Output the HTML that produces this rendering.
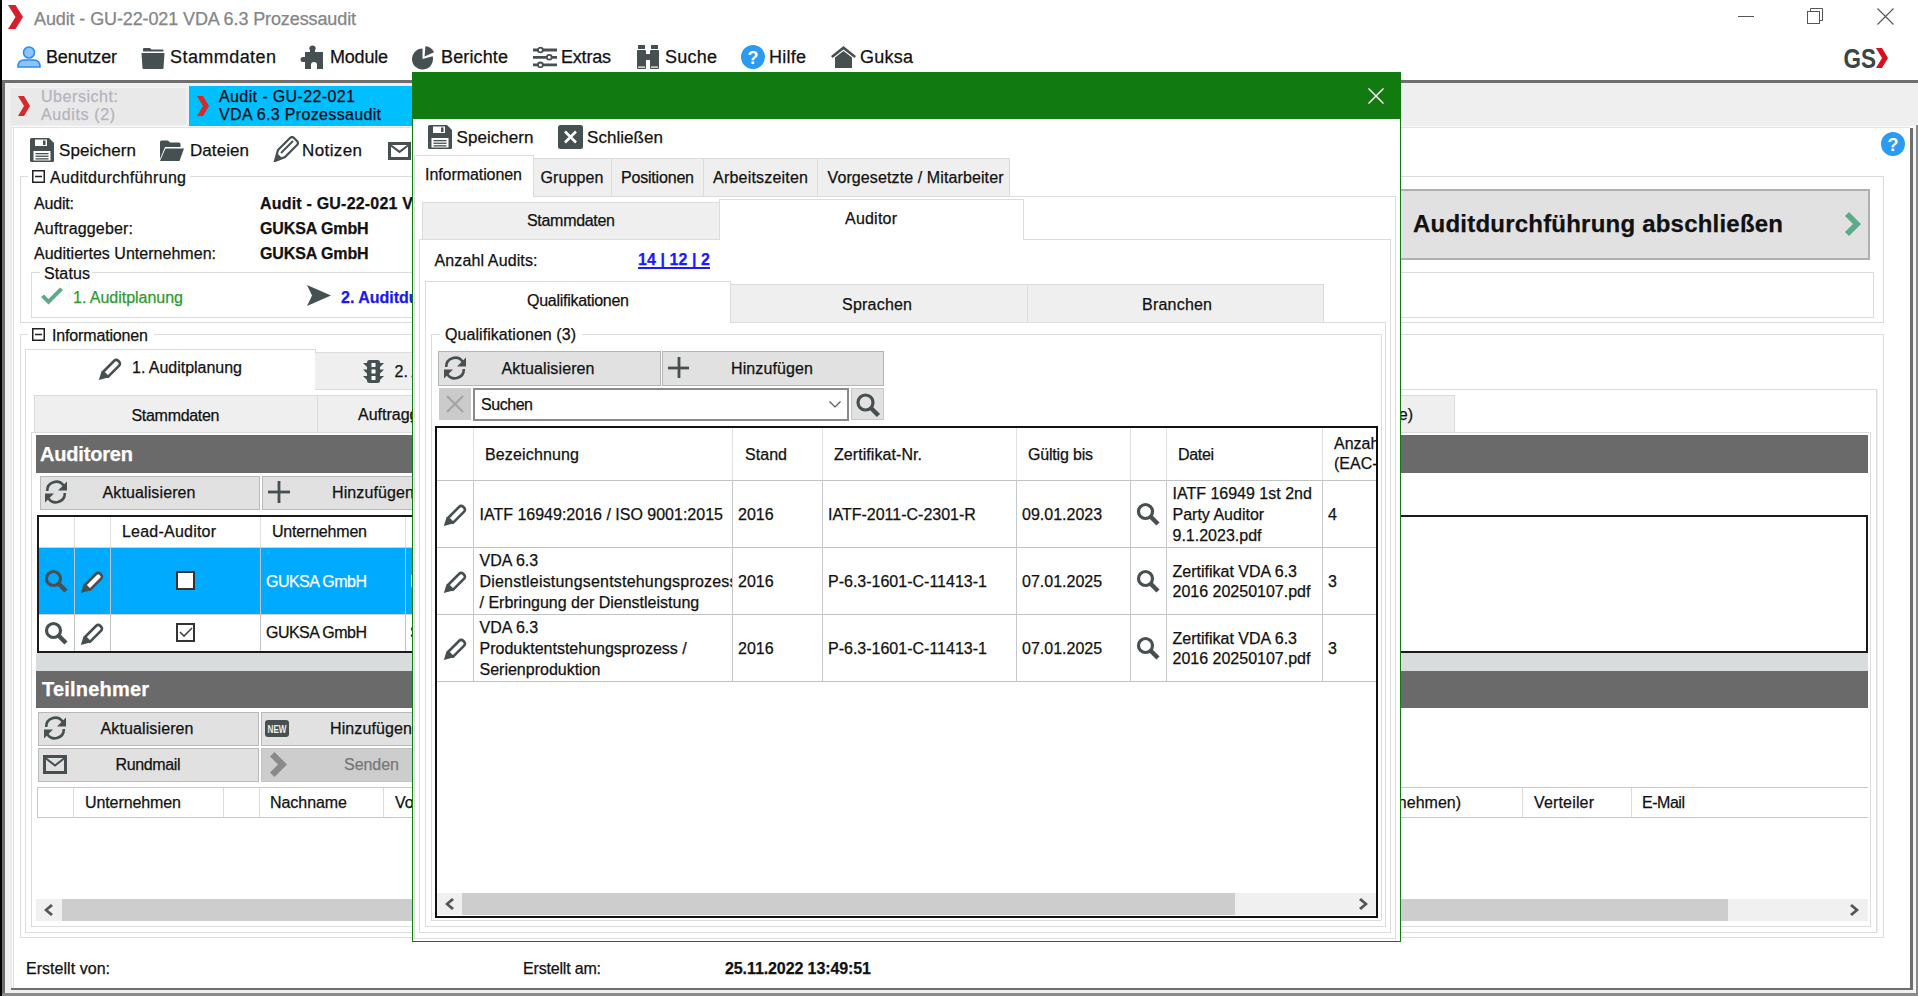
<!DOCTYPE html><html><head><meta charset="utf-8"><style>
html,body{margin:0;padding:0;width:1918px;height:996px;overflow:hidden;background:#fff;position:relative}
.a{position:absolute}
.t{font-family:"Liberation Sans",sans-serif;line-height:1;white-space:nowrap;-webkit-text-stroke:0.25px currentColor}
svg{display:block}
</style></head><body>
<div class="a" style="left:0px;top:0px;width:2px;height:996px;background:#000;"></div>
<svg class="a" style="left:8px;top:5px" width="15" height="24" viewBox="0 0 15 24"><path d="M0 0H7.5L15 12.0L7.5 24H0L7.5 12.0Z" fill="#d81e2c"/></svg>
<div class="a t" style="left:34.00px;top:10px;font-size:18px;color:#858585;letter-spacing:-0.112px;">Audit - GU-22-021 VDA 6.3 Prozessaudit</div>
<div class="a" style="left:1738px;top:16px;width:16px;height:1px;background:#555;"></div>
<svg class="a" style="left:1807px;top:8px" width="16" height="16" viewBox="0 0 16 16"><rect x="0.5" y="3.5" width="12" height="12" fill="none" stroke="#555"/><path d="M3.5 3.5V0.5H15.5V12.5H12.5" fill="none" stroke="#555"/></svg>
<svg class="a" style="left:1877px;top:8px" width="17" height="17" viewBox="0 0 17 17"><path d="M0.5 0.5L16.5 16.5M16.5 0.5L0.5 16.5" stroke="#555" stroke-width="1.1"/></svg>
<svg class="a" style="left:17px;top:46px" width="24" height="22" viewBox="0 0 24 22"><circle cx="12" cy="6.5" r="5.5" fill="#8cc4ff" stroke="#2a8cf0" stroke-width="1.6"/><path d="M1 21Q1 14 7 14H17Q23 14 23 21Z" fill="#8cc4ff" stroke="#2a8cf0" stroke-width="1.6"/></svg>
<div class="a t" style="left:46.00px;top:48px;font-size:18px;color:#111;letter-spacing:-0.148px;">Benutzer</div>
<svg class="a" style="left:141px;top:48px" width="24" height="21" viewBox="0 0 24 21"><path fill="#465050" d="M2 1Q2 0 3 0H9L10.5 1.5H21.5Q22.5 1.5 22.5 2.5V3.5H2Z"/><path fill="#465050" d="M0.5 5H23.5L22.5 20Q22.5 21 21.5 21H2.5Q1.5 21 1.5 20Z"/></svg>
<div class="a t" style="left:170.00px;top:48px;font-size:18px;color:#111;letter-spacing:0.440px;">Stammdaten</div>
<svg class="a" style="left:300px;top:45px" width="25" height="24" viewBox="0 0 25 24"><path fill="#465050" d="M5 7H10V5Q8.5 3.5 10 1.5Q12.5 -0.5 15 1.5Q16.5 3.5 15 5V7H23V24H17V20Q17 17 14 17Q11 17 11 20V24H5V17H3Q0.5 17 0.5 14.5Q0.5 12 3 12H5Z"/></svg>
<div class="a t" style="left:330.00px;top:48px;font-size:18px;color:#111;letter-spacing:-0.206px;">Module</div>
<svg class="a" style="left:412px;top:45px" width="23" height="25" viewBox="0 0 23 25"><path fill="#465050" d="M10.5 14V3.5A10.5 10.5 0 1 0 20.64 11.28Z"/><path fill="#465050" d="M12.6 11.6L13.4 1.2A10.2 10.2 0 0 1 22 7.2Z"/></svg>
<div class="a t" style="left:441.00px;top:48px;font-size:18px;color:#111;letter-spacing:0.139px;">Berichte</div>
<svg class="a" style="left:533px;top:46px" width="24" height="22" viewBox="0 0 24 22"><g stroke="#465050" stroke-width="2.8" fill="none"><path d="M0 4H24M0 11.3H24M0 18.9H24"/></g><g fill="#fff" stroke="#465050" stroke-width="1.8"><circle cx="7.4" cy="4" r="2.4"/><circle cx="16.3" cy="11.3" r="2.4"/><circle cx="7.4" cy="18.9" r="2.4"/></g></svg>
<div class="a t" style="left:561.00px;top:48px;font-size:18px;color:#111;letter-spacing:-0.202px;">Extras</div>
<svg class="a" style="left:636px;top:45px" width="24" height="25" viewBox="0 0 24 25"><g fill="#465050"><rect x="2" y="0" width="7" height="4"/><rect x="15" y="0" width="7" height="4"/><rect x="1" y="5" width="9" height="19" rx="1"/><rect x="14" y="5" width="9" height="19" rx="1"/><rect x="9" y="9" width="6" height="6"/></g><rect x="2" y="21.5" width="7" height="1.2" fill="#fff"/><rect x="15" y="21.5" width="7" height="1.2" fill="#fff"/></svg>
<div class="a t" style="left:665.00px;top:48px;font-size:18px;color:#111;letter-spacing:0.241px;">Suche</div>
<svg class="a" style="left:741px;top:45px" width="24" height="24" viewBox="0 0 24 24"><circle cx="12" cy="12" r="12" fill="#2b9af3"/><text x="12" y="18.5" font-family="Liberation Sans" font-weight="bold" font-size="18" fill="#fff" text-anchor="middle">?</text></svg>
<div class="a t" style="left:769.00px;top:48px;font-size:18px;color:#111;letter-spacing:0.248px;">Hilfe</div>
<svg class="a" style="left:831px;top:46px" width="25" height="22" viewBox="0 0 25 22"><path fill="#465050" d="M12.5 0L25 10L23.5 12L12.5 3.5L1.5 12L0 10Z"/><path fill="#465050" d="M4 11.5L12.5 5L21 11.5V22H4Z"/></svg>
<div class="a t" style="left:860.00px;top:48px;font-size:18px;color:#111;letter-spacing:0.245px;">Guksa</div>
<svg class="a" style="left:1843px;top:44px" width="34" height="26" viewBox="0 0 34 26"><text x="0.5" y="23.8" font-family="Liberation Sans" font-weight="bold" font-size="27.5" fill="#3a4545" textLength="32.5" lengthAdjust="spacingAndGlyphs">GS</text></svg>
<svg class="a" style="left:1876px;top:48px" width="12" height="20" viewBox="0 0 12 20"><path d="M0 0H6.0L12 10.0L6.0 20H0L6.0 10.0Z" fill="#d8101e"/></svg>
<div class="a" style="left:2px;top:80px;width:1916px;height:3px;background:#6e6e6e;"></div>
<div class="a" style="left:2px;top:83px;width:3px;height:913px;background:#6e6e6e;"></div>
<div class="a" style="left:5px;top:83px;width:1913px;height:43px;background:#efefef;"></div>
<div class="a" style="left:10px;top:87px;width:176px;height:38px;background:#e9e9e9;"></div>
<div class="a" style="left:10px;top:87px;width:176px;height:1px;background:#f5f5f5;"></div>
<svg class="a" style="left:18px;top:96px" width="12" height="20" viewBox="0 0 12 20"><path d="M0 0H6.0L12 10.0L6.0 20H0L6.0 10.0Z" fill="#d42a2a"/></svg>
<div class="a" style="left:36px;top:90px;width:150px;height:35px;overflow:hidden"><div class="a" style="left:-36px;top:-90px;width:1918px;height:996px">
<div class="a t" style="left:41.00px;top:89px;font-size:16px;color:#b4b4c0;letter-spacing:0.553px;">Übersicht:</div>
<div class="a t" style="left:41.00px;top:107px;font-size:16px;color:#b4b4c0;letter-spacing:0.615px;">Audits (2)</div>
</div></div>
<div class="a" style="left:189px;top:86px;width:440px;height:40px;background:#00bfff;"></div>
<svg class="a" style="left:197px;top:96px" width="12" height="20" viewBox="0 0 12 20"><path d="M0 0H6.0L12 10.0L6.0 20H0L6.0 10.0Z" fill="#d42a2a"/></svg>
<div class="a t" style="left:219.00px;top:89px;font-size:16px;color:#0a0a14;letter-spacing:0.386px;">Audit - GU-22-021</div>
<div class="a t" style="left:219.00px;top:107px;font-size:16px;color:#0a0a14;letter-spacing:0.335px;">VDA 6.3 Prozessaudit</div>
<div class="a" style="left:5px;top:126px;width:1913px;height:1px;background:#fafafa;"></div>
<div class="a" style="left:5px;top:127px;width:1905px;height:1px;background:#e2e2e2;"></div>
<div class="a" style="left:1910px;top:128px;width:3px;height:868px;background:#6e6e6e;"></div>
<div class="a" style="left:1913px;top:127px;width:3px;height:866px;background:#f5f5f5;"></div>
<div class="a" style="left:1916px;top:125px;width:2px;height:871px;background:#8a8a8a;"></div>
<div class="a" style="left:11px;top:988px;width:1900px;height:2px;background:#6e6e6e;"></div>
<div class="a" style="left:5px;top:990px;width:1908px;height:3px;background:#f0f0f0;"></div>
<div class="a" style="left:2px;top:993px;width:1916px;height:3px;background:#8a8a8a;"></div>
<div class="a" style="left:5px;top:83px;width:6px;height:910px;background:#efefef;"></div>
<div class="a" style="left:11px;top:128px;width:1px;height:860px;background:#e6e6e6;"></div>
<div class="a" style="left:13px;top:128px;width:1px;height:860px;background:#e0e0e0;"></div>
<svg class="a" style="left:30px;top:138px" width="24" height="24" viewBox="0 0 24 24"><path fill="#465050" d="M0 1.5Q0 0 1.5 0H19L24 5V22.5Q24 24 22.5 24H1.5Q0 24 0 22.5Z"/><rect x="5" y="1.5" width="12" height="6.5" fill="#fff"/><rect x="13" y="2.5" width="2.5" height="4.5" fill="#465050"/><rect x="3.5" y="13" width="17" height="9.5" fill="#fff"/><rect x="5.5" y="15" width="13" height="1.3" fill="#465050"/><rect x="5.5" y="17.6" width="13" height="1.3" fill="#465050"/><rect x="5.5" y="20.2" width="13" height="1.3" fill="#465050"/></svg>
<div class="a t" style="left:59.00px;top:142px;font-size:17px;color:#111;letter-spacing:0.057px;">Speichern</div>
<svg class="a" style="left:160px;top:138px" width="24" height="24" viewBox="0 0 24 24"><path fill="#465050" d="M0 4Q0 2.5 1.5 2.5H8L10 4.5H19Q20.5 4.5 20.5 6V9H5L0 21Z"/><path fill="#465050" d="M5.5 10.5H24L19.5 23H0Z"/></svg>
<div class="a t" style="left:190.00px;top:142px;font-size:17px;color:#111;letter-spacing:0.068px;">Dateien</div>
<svg class="a" style="left:273px;top:136px" width="26" height="26" viewBox="0 0 26 26"><path d="M2 25L5 14L17 2Q19 0 21 2L24 5Q26 7 24 9L12 21Z" fill="none" stroke="#465050" stroke-width="2.2"/><path d="M8 17L20 5" stroke="#465050" stroke-width="2"/><path d="M1 25.5L4 17L9.5 22.5Z" fill="#465050"/></svg>
<div class="a t" style="left:302.00px;top:142px;font-size:17px;color:#111;letter-spacing:0.394px;">Notizen</div>
<svg class="a" style="left:388px;top:142px" width="23" height="18" viewBox="0 0 23 18"><rect x="1.5" y="1.5" width="20" height="15" fill="none" stroke="#465050" stroke-width="3"/><path d="M3 3.5L11.5 9.9L20 3.5" fill="none" stroke="#465050" stroke-width="2"/></svg>
<div class="a" style="left:20px;top:176px;width:1864px;height:1px;background:#dcdcdc;"></div>
<div class="a" style="left:20px;top:176px;width:1px;height:147px;background:#dcdcdc;"></div>
<div class="a" style="left:20px;top:322px;width:1864px;height:1px;background:#dcdcdc;"></div>
<div class="a" style="left:1883px;top:176px;width:1px;height:147px;background:#dcdcdc;"></div>
<div class="a" style="left:28px;top:168px;width:162px;height:16px;background:#fff;"></div>
<svg class="a" style="left:32px;top:170px" width="13" height="13" viewBox="0 0 13 13"><rect x="0.75" y="0.75" width="11.5" height="11.5" fill="#fff" stroke="#222" stroke-width="1.5"/><rect x="3" y="5.75" width="7" height="1.5" fill="#222"/></svg>
<div class="a t" style="left:50.00px;top:170px;font-size:16px;color:#111;letter-spacing:0.328px;">Auditdurchführung</div>
<div class="a t" style="left:34.00px;top:196px;font-size:16px;color:#111;letter-spacing:-0.183px;">Audit:</div>
<div class="a t" style="left:34.00px;top:221px;font-size:16px;color:#111;letter-spacing:0.171px;">Auftraggeber:</div>
<div class="a t" style="left:34.00px;top:246px;font-size:16px;color:#111;letter-spacing:0.025px;">Auditiertes Unternehmen:</div>
<div class="a t" style="left:260.00px;top:196px;font-size:16px;color:#111;font-weight:bold;letter-spacing:0.201px;">Audit - GU-22-021 VDA 6.3 Prozessaudit</div>
<div class="a t" style="left:260.00px;top:221px;font-size:16px;color:#111;font-weight:bold;letter-spacing:-0.115px;">GUKSA GmbH</div>
<div class="a t" style="left:260.00px;top:246px;font-size:16px;color:#111;font-weight:bold;letter-spacing:-0.115px;">GUKSA GmbH</div>
<div class="a" style="left:31px;top:272px;width:1843px;height:46px;border:1px solid #dcdcdc;box-sizing:border-box;"></div>
<div class="a" style="left:40px;top:264px;width:52px;height:14px;background:#fff;"></div>
<div class="a t" style="left:44.00px;top:266px;font-size:16px;color:#111;letter-spacing:0.128px;">Status</div>
<svg class="a" style="left:40px;top:287px" width="24" height="19" viewBox="0 0 24 19"><path d="M1 10L8.5 17.5L23 3L20 0.5L8.5 12L4 7.5Z" fill="#5daa88"/></svg>
<div class="a t" style="left:73.00px;top:290px;font-size:16px;color:#2e9a2e;letter-spacing:-0.022px;">1. Auditplanung</div>
<svg class="a" style="left:307px;top:285px" width="24" height="21" viewBox="0 0 24 21"><path d="M0 0L24 10.5L0 21L5 10.5Z" fill="#465050"/></svg>
<div class="a t" style="left:341.00px;top:290px;font-size:16px;color:#1a1aee;font-weight:bold;">2. Auditdurchführung</div>
<div class="a" style="left:1399px;top:189px;width:471px;height:71px;background:#e1e1e1;border:2px solid #b0b0b0;box-sizing:border-box;"></div>
<div class="a t" style="left:1413.00px;top:212px;font-size:24px;color:#111;font-weight:bold;letter-spacing:0.215px;">Auditdurchführung abschließen</div>
<svg class="a" style="left:1845px;top:212px" width="16" height="24" viewBox="0 0 16 24"><path d="M0 4L4 0L16 12L4 24L0 20L8 12Z" fill="#5daa88"/></svg>
<svg class="a" style="left:1881px;top:132px" width="24" height="24" viewBox="0 0 24 24"><circle cx="12" cy="12" r="12" fill="#2b9af3"/><text x="12" y="19" font-family="Liberation Sans" font-weight="bold" font-size="18" fill="#fff" text-anchor="middle">?</text></svg>
<div class="a" style="left:20px;top:334px;width:1864px;height:1px;background:#dcdcdc;"></div>
<div class="a" style="left:20px;top:334px;width:1px;height:604px;background:#dcdcdc;"></div>
<div class="a" style="left:1883px;top:334px;width:1px;height:604px;background:#dcdcdc;"></div>
<div class="a" style="left:20px;top:937px;width:1864px;height:1px;background:#dcdcdc;"></div>
<div class="a" style="left:28px;top:326px;width:126px;height:16px;background:#fff;"></div>
<svg class="a" style="left:32px;top:328px" width="13" height="13" viewBox="0 0 13 13"><rect x="0.75" y="0.75" width="11.5" height="11.5" fill="#fff" stroke="#222" stroke-width="1.5"/><rect x="3" y="5.75" width="7" height="1.5" fill="#222"/></svg>
<div class="a t" style="left:52.00px;top:328px;font-size:16px;color:#111;letter-spacing:-0.152px;">Informationen</div>
<div class="a" style="left:25px;top:349px;width:290px;height:42px;background:#fff;"></div>
<div class="a" style="left:25px;top:349px;width:290px;height:1px;background:#dcdcdc;"></div>
<div class="a" style="left:25px;top:349px;width:1px;height:41px;background:#dcdcdc;"></div>
<div class="a" style="left:315px;top:349px;width:1px;height:41px;background:#dcdcdc;"></div>
<svg class="a" style="left:98px;top:356px" width="24" height="24" viewBox="0 0 24 24"><path d="M5 16L16 5Q18.2 2.8 20.4 5L20.9 5.5Q23.1 7.7 20.9 9.9L9.9 20.9Z" fill="none" stroke="#465050" stroke-width="2.6" stroke-linejoin="round"/><path d="M0.8 24L3.6 15L10.2 21.4Z" fill="#465050"/></svg>
<div class="a t" style="left:132.00px;top:360px;font-size:16px;color:#111;letter-spacing:-0.022px;">1. Auditplanung</div>
<div class="a" style="left:315px;top:352px;width:900px;height:38px;background:#efefef;"></div>
<div class="a" style="left:315px;top:352px;width:900px;height:1px;background:#dcdcdc;"></div>
<div class="a" style="left:315px;top:389px;width:1561px;height:1px;background:#dcdcdc;"></div>
<svg class="a" style="left:363px;top:360px" width="21" height="23" viewBox="0 0 21 23"><g fill="#465050"><rect x="4" y="0" width="13" height="23" rx="2.5"/><path d="M0 3H4V7ZM21 3H17V7ZM0 9.5H4V13.5ZM21 9.5H17V13.5ZM0 16H4V20ZM21 16H17V20Z"/></g><rect x="8.5" y="3" width="4" height="4" fill="#fff"/><rect x="8.5" y="9.5" width="4" height="4" fill="#fff"/><rect x="8.5" y="16" width="4" height="4" fill="#fff"/></svg>
<div class="a t" style="left:394.60px;top:364px;font-size:16px;color:#111;">2. Auditdurchführung</div>
<div class="a" style="left:25px;top:389px;width:1px;height:544px;background:#dcdcdc;"></div>
<div class="a" style="left:1876px;top:389px;width:1px;height:544px;background:#dcdcdc;"></div>
<div class="a" style="left:25px;top:932px;width:1852px;height:1px;background:#dcdcdc;"></div>
<div class="a" style="left:1877px;top:390px;width:1px;height:542px;background:#eeeeee;"></div>
<div class="a" style="left:31px;top:432px;width:1840px;height:1px;background:#dcdcdc;"></div>
<div class="a" style="left:31px;top:432px;width:1px;height:495px;background:#dcdcdc;"></div>
<div class="a" style="left:1870px;top:432px;width:1px;height:495px;background:#dcdcdc;"></div>
<div class="a" style="left:31px;top:926px;width:1840px;height:1px;background:#dcdcdc;"></div>
<div class="a" style="left:34px;top:395px;width:284px;height:38px;background:#efefef;border:1px solid #dcdcdc;box-sizing:border-box;"></div>
<div class="a t" style="left:131.50px;top:408px;font-size:16px;color:#111;letter-spacing:-0.301px;">Stammdaten</div>
<div class="a" style="left:317px;top:395px;width:1138px;height:38px;background:#efefef;border:1px solid #dcdcdc;box-sizing:border-box;"></div>
<div class="a t" style="left:358.00px;top:407px;font-size:16px;color:#111;">Auftraggeber</div>
<div class="a t" style="left:1398.78px;top:407px;font-size:16px;color:#111;">e)</div>
<div class="a" style="left:36px;top:435px;width:1832px;height:38px;background:#6a6a6a;"></div>
<div class="a t" style="left:40.00px;top:444px;font-size:20px;color:#fff;font-weight:bold;letter-spacing:-0.179px;">Auditoren</div>
<div class="a" style="left:40px;top:476px;width:220px;height:34px;background:#e1e1e1;border:1px solid #b9b9b9;box-sizing:border-box;"></div>
<svg class="a" style="left:44px;top:480px" width="24" height="24" viewBox="0 0 24 24"><path d="M3.2 11A9 9 0 0 1 19.5 5.5" fill="none" stroke="#465050" stroke-width="2.6"/><path d="M23 1.5V10.5H14Z" fill="#465050"/><path d="M20.8 13A9 9 0 0 1 4.5 18.5" fill="none" stroke="#465050" stroke-width="2.6"/><path d="M1 22.5V13.5H10Z" fill="#465050"/></svg>
<div class="a t" style="left:102.50px;top:485px;font-size:16px;color:#111;letter-spacing:0.117px;">Aktualisieren</div>
<div class="a" style="left:262px;top:476px;width:400px;height:34px;background:#e1e1e1;border:1px solid #b9b9b9;box-sizing:border-box;"></div>
<svg class="a" style="left:268px;top:481px" width="22" height="22" viewBox="0 0 22 22"><rect x="9.6" y="0" width="2.8" height="22" fill="#465050"/><rect x="0" y="9.6" width="22" height="2.8" fill="#465050"/></svg>
<div class="a t" style="left:332.00px;top:485px;font-size:16px;color:#111;letter-spacing:0.118px;">Hinzufügen</div>
<div class="a" style="left:37px;top:515px;width:1831px;height:138px;background:#fff;border:2px solid #1a1a1a;box-sizing:border-box;"></div>
<div class="a" style="left:39px;top:547px;width:1100px;height:1px;background:#d0d0d0;"></div>
<div class="a" style="left:39px;top:548px;width:1100px;height:66px;background:#00aaff;"></div>
<div class="a" style="left:39px;top:614px;width:1100px;height:1px;background:#d0d0d0;"></div>
<div class="a" style="left:74px;top:517px;width:1px;height:30px;background:#dfe2e2;"></div>
<div class="a" style="left:74px;top:547px;width:1px;height:104px;background:#c0c4c4;"></div>
<div class="a" style="left:110px;top:517px;width:1px;height:30px;background:#dfe2e2;"></div>
<div class="a" style="left:110px;top:547px;width:1px;height:104px;background:#c0c4c4;"></div>
<div class="a" style="left:260px;top:517px;width:1px;height:30px;background:#dfe2e2;"></div>
<div class="a" style="left:260px;top:547px;width:1px;height:104px;background:#c0c4c4;"></div>
<div class="a" style="left:405px;top:517px;width:1px;height:30px;background:#dfe2e2;"></div>
<div class="a" style="left:405px;top:547px;width:1px;height:104px;background:#c0c4c4;"></div>
<div class="a t" style="left:122.00px;top:524px;font-size:16px;color:#111;letter-spacing:0.217px;">Lead-Auditor</div>
<div class="a t" style="left:272.00px;top:524px;font-size:16px;color:#111;letter-spacing:-0.194px;">Unternehmen</div>
<svg class="a" style="left:44px;top:569px" width="24" height="24" viewBox="0 0 24 24"><circle cx="9.5" cy="9.5" r="7" fill="none" stroke="#465050" stroke-width="3.2"/><path d="M14.5 14.5L22 22" stroke="#465050" stroke-width="4.5" stroke-linecap="butt"/></svg>
<svg class="a" style="left:80px;top:569px" width="24" height="24" viewBox="0 0 24 24"><path d="M5 16L16 5Q18.2 2.8 20.4 5L20.9 5.5Q23.1 7.7 20.9 9.9L9.9 20.9Z" fill="#fff" stroke="#465050" stroke-width="2.6" stroke-linejoin="round"/><path d="M0.8 24L3.6 15L10.2 21.4Z" fill="#465050"/></svg>
<div class="a" style="left:176px;top:571px;width:19px;height:19px;background:#fff;border:2px solid #333;box-sizing:border-box;"></div>
<div class="a t" style="left:266.00px;top:574px;font-size:16px;color:#fff;letter-spacing:-0.534px;">GUKSA GmbH</div>
<svg class="a" style="left:44px;top:621px" width="24" height="24" viewBox="0 0 24 24"><circle cx="9.5" cy="9.5" r="7" fill="none" stroke="#465050" stroke-width="3.2"/><path d="M14.5 14.5L22 22" stroke="#465050" stroke-width="4.5" stroke-linecap="butt"/></svg>
<svg class="a" style="left:80px;top:621px" width="24" height="24" viewBox="0 0 24 24"><path d="M5 16L16 5Q18.2 2.8 20.4 5L20.9 5.5Q23.1 7.7 20.9 9.9L9.9 20.9Z" fill="none" stroke="#465050" stroke-width="2.6" stroke-linejoin="round"/><path d="M0.8 24L3.6 15L10.2 21.4Z" fill="#465050"/></svg>
<div class="a" style="left:176px;top:623px;width:19px;height:19px;background:#fff;border:2px solid #333;box-sizing:border-box;"></div>
<svg class="a" style="left:179px;top:627px" width="14" height="11" viewBox="0 0 14 11"><path d="M1 5L5 9L13 1" fill="none" stroke="#444" stroke-width="1.6"/></svg>
<div class="a t" style="left:266.00px;top:625px;font-size:16px;color:#111;letter-spacing:-0.534px;">GUKSA GmbH</div>
<div class="a t" style="left:410.00px;top:574px;font-size:16px;color:#fff;">M</div>
<div class="a t" style="left:410.00px;top:625px;font-size:16px;color:#111;">S</div>
<div class="a" style="left:36px;top:653px;width:1832px;height:18px;background:#d9dcdd;"></div>
<div class="a" style="left:36px;top:671px;width:1832px;height:37px;background:#6a6a6a;"></div>
<div class="a t" style="left:42.00px;top:679px;font-size:20px;color:#fff;font-weight:bold;letter-spacing:0.199px;">Teilnehmer</div>
<div class="a" style="left:38px;top:712px;width:221px;height:34px;background:#e1e1e1;border:1px solid #b9b9b9;box-sizing:border-box;"></div>
<svg class="a" style="left:43px;top:716px" width="24" height="24" viewBox="0 0 24 24"><path d="M3.2 11A9 9 0 0 1 19.5 5.5" fill="none" stroke="#465050" stroke-width="2.6"/><path d="M23 1.5V10.5H14Z" fill="#465050"/><path d="M20.8 13A9 9 0 0 1 4.5 18.5" fill="none" stroke="#465050" stroke-width="2.6"/><path d="M1 22.5V13.5H10Z" fill="#465050"/></svg>
<div class="a t" style="left:100.50px;top:721px;font-size:16px;color:#111;letter-spacing:0.117px;">Aktualisieren</div>
<div class="a" style="left:261px;top:712px;width:400px;height:34px;background:#e1e1e1;border:1px solid #b9b9b9;box-sizing:border-box;"></div>
<svg class="a" style="left:265px;top:720px" width="24" height="17" viewBox="0 0 24 17"><rect width="24" height="17" rx="3" fill="#465050"/><text x="2.5" y="13" font-family="Liberation Sans" font-weight="bold" font-size="11" fill="#eee" textLength="19" lengthAdjust="spacingAndGlyphs">NEW</text></svg>
<div class="a t" style="left:330.00px;top:721px;font-size:16px;color:#111;letter-spacing:0.118px;">Hinzufügen</div>
<div class="a" style="left:38px;top:748px;width:221px;height:34px;background:#e1e1e1;border:1px solid #b9b9b9;box-sizing:border-box;"></div>
<svg class="a" style="left:43px;top:755px" width="24" height="19" viewBox="0 0 24 19"><rect x="1.5" y="1.5" width="21" height="16" fill="none" stroke="#465050" stroke-width="3"/><path d="M3 3.5L12.0 10.450000000000001L21 3.5" fill="none" stroke="#465050" stroke-width="2"/></svg>
<div class="a t" style="left:115.50px;top:757px;font-size:16px;color:#111;letter-spacing:-0.369px;">Rundmail</div>
<div class="a" style="left:261px;top:748px;width:400px;height:34px;background:#cdcdcd;border:1px solid #c4c4c4;box-sizing:border-box;"></div>
<svg class="a" style="left:270px;top:752px" width="17" height="25" viewBox="0 0 17 25"><path d="M0 4.5L4.5 0L17 12.5L4.5 25L0 20.5L8 12.5Z" fill="#8a8a8a"/></svg>
<div class="a t" style="left:344.00px;top:757px;font-size:16px;color:#777;letter-spacing:-0.032px;">Senden</div>
<div class="a" style="left:37px;top:787px;width:1831px;height:1px;background:#c4c8c8;"></div>
<div class="a" style="left:37px;top:817px;width:1831px;height:1px;background:#c4c8c8;"></div>
<div class="a" style="left:37px;top:787px;width:1px;height:31px;background:#c4c8c8;"></div>
<div class="a" style="left:73px;top:788px;width:1px;height:29px;background:#dcdcdc;"></div>
<div class="a" style="left:223px;top:788px;width:1px;height:29px;background:#dcdcdc;"></div>
<div class="a" style="left:259px;top:788px;width:1px;height:29px;background:#dcdcdc;"></div>
<div class="a" style="left:383px;top:788px;width:1px;height:29px;background:#dcdcdc;"></div>
<div class="a t" style="left:85.00px;top:795px;font-size:16px;color:#111;letter-spacing:-0.094px;">Unternehmen</div>
<div class="a t" style="left:270.00px;top:795px;font-size:16px;color:#111;letter-spacing:-0.053px;">Nachname</div>
<div class="a t" style="left:395.00px;top:795px;font-size:16px;color:#111;">Vorname</div>
<div class="a t" style="left:1353.41px;top:795px;font-size:16px;color:#111;">(Unternehmen)</div>
<div class="a" style="left:1522px;top:788px;width:1px;height:29px;background:#dcdcdc;"></div>
<div class="a" style="left:1631px;top:788px;width:1px;height:29px;background:#dcdcdc;"></div>
<div class="a t" style="left:1534.00px;top:795px;font-size:16px;color:#111;letter-spacing:0.163px;">Verteiler</div>
<div class="a t" style="left:1642.00px;top:795px;font-size:16px;color:#111;letter-spacing:-0.467px;">E-Mail</div>
<div class="a" style="left:36px;top:899px;width:1832px;height:22px;background:#f0f0f0;"></div>
<div class="a" style="left:62px;top:899px;width:1666px;height:22px;background:#cdcdcd;"></div>
<svg class="a" style="left:43px;top:904px" width="10" height="12" viewBox="0 0 10 12"><path d="M8 0L10 2L5 6L10 10L8 12L1 6Z" fill="#555"/></svg>
<svg class="a" style="left:1850px;top:904px" width="10" height="12" viewBox="0 0 10 12"><path d="M2 0L0 2L5 6L0 10L2 12L9 6Z" fill="#555"/></svg>
<div class="a t" style="left:26.00px;top:961px;font-size:16px;color:#111;letter-spacing:0.035px;">Erstellt von:</div>
<div class="a t" style="left:523.00px;top:961px;font-size:16px;color:#111;letter-spacing:-0.183px;">Erstellt am:</div>
<div class="a t" style="left:725.00px;top:961px;font-size:16px;color:#111;font-weight:bold;letter-spacing:-0.093px;">25.11.2022 13:49:51</div>
<div class="a" style="left:412px;top:72px;width:989px;height:870px;background:#fff;"></div>
<div class="a" style="left:412px;top:72px;width:989px;height:47px;background:#117a11;"></div>
<div class="a" style="left:412px;top:72px;width:1px;height:870px;background:#117a11;"></div>
<div class="a" style="left:1400px;top:72px;width:1px;height:870px;background:#117a11;"></div>
<div class="a" style="left:412px;top:941px;width:989px;height:1px;background:#117a11;"></div>
<svg class="a" style="left:1368px;top:88px" width="16" height="16" viewBox="0 0 16 16"><path d="M0.5 0.5L15.5 15.5M15.5 0.5L0.5 15.5" stroke="#fff" stroke-width="1.5"/></svg>
<svg class="a" style="left:428px;top:125px" width="24" height="24" viewBox="0 0 24 24"><path fill="#465050" d="M0 1.5Q0 0 1.5 0H19L24 5V22.5Q24 24 22.5 24H1.5Q0 24 0 22.5Z"/><rect x="5" y="1.5" width="12" height="6.5" fill="#fff"/><rect x="13" y="2.5" width="2.5" height="4.5" fill="#465050"/><rect x="3.5" y="13" width="17" height="9.5" fill="#fff"/><rect x="5.5" y="15" width="13" height="1.3" fill="#465050"/><rect x="5.5" y="17.6" width="13" height="1.3" fill="#465050"/><rect x="5.5" y="20.2" width="13" height="1.3" fill="#465050"/></svg>
<div class="a t" style="left:456.50px;top:129px;font-size:17px;color:#111;letter-spacing:0.057px;">Speichern</div>
<svg class="a" style="left:558px;top:125px" width="25" height="24" viewBox="0 0 25 24"><rect width="25" height="24" rx="2.5" fill="#465050"/><path d="M7 6.5L18 17.5M18 6.5L7 17.5" stroke="#fff" stroke-width="2.6"/></svg>
<div class="a t" style="left:587.00px;top:129px;font-size:17px;color:#111;letter-spacing:0.051px;">Schließen</div>
<div class="a" style="left:414px;top:196px;width:982px;height:1px;background:#dcdcdc;"></div>
<div class="a" style="left:414px;top:196px;width:1px;height:743px;background:#dcdcdc;"></div>
<div class="a" style="left:1395px;top:196px;width:1px;height:743px;background:#dcdcdc;"></div>
<div class="a" style="left:414px;top:938px;width:982px;height:1px;background:#dcdcdc;"></div>
<div class="a" style="left:414px;top:155px;width:119px;height:42px;background:#fff;"></div>
<div class="a" style="left:414px;top:155px;width:119px;height:1px;background:#dcdcdc;"></div>
<div class="a" style="left:414px;top:155px;width:1px;height:41px;background:#dcdcdc;"></div>
<div class="a" style="left:533px;top:155px;width:1px;height:41px;background:#dcdcdc;"></div>
<div class="a t" style="left:425.00px;top:167px;font-size:16px;color:#111;letter-spacing:-0.069px;">Informationen</div>
<div class="a" style="left:533px;top:158px;width:477px;height:39px;background:#efefef;border:1px solid #dcdcdc;box-sizing:border-box;"></div>
<div class="a" style="left:611px;top:158px;width:1px;height:38px;background:#dcdcdc;"></div>
<div class="a" style="left:703px;top:158px;width:1px;height:38px;background:#dcdcdc;"></div>
<div class="a" style="left:817px;top:158px;width:1px;height:38px;background:#dcdcdc;"></div>
<div class="a t" style="left:540.50px;top:170px;font-size:16px;color:#111;letter-spacing:0.123px;">Gruppen</div>
<div class="a t" style="left:621.00px;top:170px;font-size:16px;color:#111;letter-spacing:-0.191px;">Positionen</div>
<div class="a t" style="left:713.00px;top:170px;font-size:16px;color:#111;letter-spacing:0.209px;">Arbeitszeiten</div>
<div class="a t" style="left:827.50px;top:170px;font-size:16px;color:#111;letter-spacing:0.108px;">Vorgesetzte / Mitarbeiter</div>
<div class="a" style="left:419px;top:239px;width:1px;height:694px;background:#dcdcdc;"></div>
<div class="a" style="left:1390px;top:239px;width:1px;height:694px;background:#dcdcdc;"></div>
<div class="a" style="left:419px;top:932px;width:972px;height:1px;background:#dcdcdc;"></div>
<div class="a" style="left:419px;top:239px;width:972px;height:1px;background:#dcdcdc;"></div>
<div class="a" style="left:422px;top:202px;width:298px;height:38px;background:#efefef;border:1px solid #dcdcdc;box-sizing:border-box;"></div>
<div class="a" style="left:720px;top:199px;width:304px;height:41px;background:#fff;"></div>
<div class="a" style="left:719px;top:199px;width:305px;height:1px;background:#dcdcdc;"></div>
<div class="a" style="left:1023px;top:199px;width:1px;height:41px;background:#dcdcdc;"></div>
<div class="a" style="left:719px;top:199px;width:1px;height:4px;background:#dcdcdc;"></div>
<div class="a t" style="left:527.00px;top:213px;font-size:16px;color:#111;letter-spacing:-0.301px;">Stammdaten</div>
<div class="a t" style="left:845.00px;top:211px;font-size:16px;color:#111;letter-spacing:0.218px;">Auditor</div>
<div class="a t" style="left:434.50px;top:253px;font-size:16px;color:#111;letter-spacing:0.123px;">Anzahl Audits:</div>
<div class="a t" style="left:638.00px;top:252px;font-size:16px;color:#1a1aff;font-weight:bold;letter-spacing:0.078px;">14 | 12 | 2</div>
<div class="a" style="left:638px;top:267px;width:72px;height:1.5px;background:#1a1aff;"></div>
<div class="a" style="left:425px;top:281px;width:1px;height:646px;background:#dcdcdc;"></div>
<div class="a" style="left:1385px;top:322px;width:1px;height:605px;background:#dcdcdc;"></div>
<div class="a" style="left:425px;top:926px;width:961px;height:1px;background:#dcdcdc;"></div>
<div class="a" style="left:426px;top:282px;width:304px;height:41px;background:#fff;"></div>
<div class="a" style="left:425px;top:281px;width:305px;height:1px;background:#dcdcdc;"></div>
<div class="a" style="left:730px;top:281px;width:1px;height:41px;background:#dcdcdc;"></div>
<div class="a" style="left:730px;top:284px;width:594px;height:39px;background:#efefef;border:1px solid #dcdcdc;box-sizing:border-box;"></div>
<div class="a" style="left:1027px;top:284px;width:1px;height:38px;background:#dcdcdc;"></div>
<div class="a" style="left:1324px;top:322px;width:61px;height:1px;background:#dcdcdc;"></div>
<div class="a t" style="left:527.00px;top:293px;font-size:16px;color:#111;letter-spacing:-0.274px;">Qualifikationen</div>
<div class="a t" style="left:842.00px;top:297px;font-size:16px;color:#111;letter-spacing:0.216px;">Sprachen</div>
<div class="a t" style="left:1142.00px;top:297px;font-size:16px;color:#111;letter-spacing:0.216px;">Branchen</div>
<div class="a" style="left:431px;top:334px;width:950px;height:1px;background:#dcdcdc;"></div>
<div class="a" style="left:431px;top:334px;width:1px;height:586px;background:#dcdcdc;"></div>
<div class="a" style="left:1381px;top:334px;width:1px;height:586px;background:#dcdcdc;"></div>
<div class="a" style="left:431px;top:920px;width:950px;height:1px;background:#dcdcdc;"></div>
<div class="a" style="left:440px;top:326px;width:142px;height:16px;background:#fff;"></div>
<div class="a t" style="left:445.00px;top:327px;font-size:16px;color:#111;letter-spacing:0.065px;">Qualifikationen (3)</div>
<div class="a" style="left:438px;top:351px;width:223px;height:35px;background:#e1e1e1;border:1px solid #b4b4b4;box-sizing:border-box;"></div>
<svg class="a" style="left:443px;top:356px" width="24" height="24" viewBox="0 0 24 24"><path d="M3.2 11A9 9 0 0 1 19.5 5.5" fill="none" stroke="#465050" stroke-width="2.6"/><path d="M23 1.5V10.5H14Z" fill="#465050"/><path d="M20.8 13A9 9 0 0 1 4.5 18.5" fill="none" stroke="#465050" stroke-width="2.6"/><path d="M1 22.5V13.5H10Z" fill="#465050"/></svg>
<div class="a t" style="left:501.50px;top:361px;font-size:16px;color:#111;letter-spacing:0.117px;">Aktualisieren</div>
<div class="a" style="left:662px;top:351px;width:222px;height:35px;background:#e1e1e1;border:1px solid #b4b4b4;box-sizing:border-box;"></div>
<svg class="a" style="left:668px;top:357px" width="21" height="21" viewBox="0 0 21 21"><rect x="9.6" y="0" width="2.8" height="22" fill="#465050"/><rect x="0" y="9.6" width="22" height="2.8" fill="#465050"/></svg>
<div class="a t" style="left:731.00px;top:361px;font-size:16px;color:#111;letter-spacing:0.118px;">Hinzufügen</div>
<div class="a" style="left:439px;top:388px;width:32px;height:32px;background:#cbcbcb;"></div>
<svg class="a" style="left:446px;top:395px" width="18" height="18" viewBox="0 0 18 18"><path d="M1 1L17 17M17 1L1 17" stroke="#a4a4a4" stroke-width="2.2"/></svg>
<div class="a" style="left:473px;top:388px;width:376px;height:33px;background:#fff;border:2px solid #8a8a8a;box-sizing:border-box;"></div>
<div class="a t" style="left:481.00px;top:397px;font-size:16px;color:#111;letter-spacing:-0.453px;">Suchen</div>
<svg class="a" style="left:829px;top:401px" width="12" height="7" viewBox="0 0 12 7"><path d="M0.5 0.5L6 6L11.5 0.5" fill="none" stroke="#555" stroke-width="1.2"/></svg>
<div class="a" style="left:851px;top:388px;width:33px;height:32px;background:#e1e1e1;border:1px solid #c8c8c8;box-sizing:border-box;"></div>
<svg class="a" style="left:855px;top:392px" width="26" height="26" viewBox="0 0 26 26"><circle cx="10.5" cy="10.5" r="7.5" fill="none" stroke="#465050" stroke-width="3.2"/><path d="M16 16L23.5 23.5" stroke="#465050" stroke-width="4.5"/></svg>
<div class="a" style="left:435px;top:426px;width:943px;height:492px;background:#fff;border:2px solid #111;box-sizing:border-box;"></div>
<div class="a" style="left:437px;top:480px;width:939px;height:1px;background:#bfc3c3;"></div>
<div class="a" style="left:437px;top:547px;width:939px;height:1px;background:#bfc3c3;"></div>
<div class="a" style="left:437px;top:614px;width:939px;height:1px;background:#bfc3c3;"></div>
<div class="a" style="left:437px;top:681px;width:939px;height:1px;background:#bfc3c3;"></div>
<div class="a" style="left:473px;top:428px;width:1px;height:52px;background:#dfe2e2;"></div>
<div class="a" style="left:473px;top:480px;width:1px;height:201px;background:#c4c8c8;"></div>
<div class="a" style="left:732px;top:428px;width:1px;height:52px;background:#dfe2e2;"></div>
<div class="a" style="left:732px;top:480px;width:1px;height:201px;background:#c4c8c8;"></div>
<div class="a" style="left:822px;top:428px;width:1px;height:52px;background:#dfe2e2;"></div>
<div class="a" style="left:822px;top:480px;width:1px;height:201px;background:#c4c8c8;"></div>
<div class="a" style="left:1016px;top:428px;width:1px;height:52px;background:#dfe2e2;"></div>
<div class="a" style="left:1016px;top:480px;width:1px;height:201px;background:#c4c8c8;"></div>
<div class="a" style="left:1130px;top:428px;width:1px;height:52px;background:#dfe2e2;"></div>
<div class="a" style="left:1130px;top:480px;width:1px;height:201px;background:#c4c8c8;"></div>
<div class="a" style="left:1166px;top:428px;width:1px;height:52px;background:#dfe2e2;"></div>
<div class="a" style="left:1166px;top:480px;width:1px;height:201px;background:#c4c8c8;"></div>
<div class="a" style="left:1322px;top:428px;width:1px;height:52px;background:#dfe2e2;"></div>
<div class="a" style="left:1322px;top:480px;width:1px;height:201px;background:#c4c8c8;"></div>
<div class="a t" style="left:485.00px;top:447px;font-size:16px;color:#111;letter-spacing:0.149px;">Bezeichnung</div>
<div class="a t" style="left:745.00px;top:447px;font-size:16px;color:#111;letter-spacing:0.047px;">Stand</div>
<div class="a t" style="left:834.00px;top:447px;font-size:16px;color:#111;letter-spacing:0.068px;">Zertifikat-Nr.</div>
<div class="a t" style="left:1028.00px;top:447px;font-size:16px;color:#111;letter-spacing:-0.188px;">Gültig bis</div>
<div class="a t" style="left:1178.00px;top:447px;font-size:16px;color:#111;letter-spacing:-0.338px;">Datei</div>
<div class="a" style="left:1323px;top:428px;width:53px;height:52px;overflow:hidden"><div class="a" style="left:-1323px;top:-428px;width:1918px;height:996px">
<div class="a t" style="left:1334.00px;top:436px;font-size:16px;color:#111;">Anzahl</div>
<div class="a t" style="left:1334.00px;top:456px;font-size:16px;color:#111;">(EAC-Codes)</div>
</div></div>
<svg class="a" style="left:443px;top:501.5px" width="24" height="24" viewBox="0 0 24 24"><path d="M5 16L16 5Q18.2 2.8 20.4 5L20.9 5.5Q23.1 7.7 20.9 9.9L9.9 20.9Z" fill="none" stroke="#465050" stroke-width="2.6" stroke-linejoin="round"/><path d="M0.8 24L3.6 15L10.2 21.4Z" fill="#465050"/></svg>
<div class="a" style="left:474px;top:480.5px;width:258px;height:66px;overflow:hidden"><div class="a" style="left:-474px;top:-480.5px;width:1918px;height:996px">
<div class="a t" style="left:479.50px;top:507px;font-size:16px;color:#111;">IATF 16949:2016 / ISO 9001:2015</div>
</div></div>
<div class="a t" style="left:738.00px;top:507px;font-size:16px;color:#111;">2016</div>
<div class="a t" style="left:828.00px;top:507px;font-size:16px;color:#111;">IATF-2011-C-2301-R</div>
<div class="a t" style="left:1022.00px;top:507px;font-size:16px;color:#111;">09.01.2023</div>
<svg class="a" style="left:1136px;top:501.5px" width="24" height="24" viewBox="0 0 24 24"><circle cx="9.5" cy="9.5" r="7" fill="none" stroke="#465050" stroke-width="3.2"/><path d="M14.5 14.5L22 22" stroke="#465050" stroke-width="4.5" stroke-linecap="butt"/></svg>
<div class="a t" style="left:1172.50px;top:486px;font-size:16px;color:#111;">IATF 16949 1st 2nd</div>
<div class="a t" style="left:1172.50px;top:507px;font-size:16px;color:#111;">Party Auditor</div>
<div class="a t" style="left:1172.50px;top:528px;font-size:16px;color:#111;">9.1.2023.pdf</div>
<div class="a t" style="left:1328.00px;top:507px;font-size:16px;color:#111;">4</div>
<svg class="a" style="left:443px;top:568.5px" width="24" height="24" viewBox="0 0 24 24"><path d="M5 16L16 5Q18.2 2.8 20.4 5L20.9 5.5Q23.1 7.7 20.9 9.9L9.9 20.9Z" fill="none" stroke="#465050" stroke-width="2.6" stroke-linejoin="round"/><path d="M0.8 24L3.6 15L10.2 21.4Z" fill="#465050"/></svg>
<div class="a" style="left:474px;top:547.5px;width:258px;height:66px;overflow:hidden"><div class="a" style="left:-474px;top:-547.5px;width:1918px;height:996px">
<div class="a t" style="left:479.50px;top:553px;font-size:16px;color:#111;">VDA 6.3</div>
<div class="a t" style="left:479.50px;top:574px;font-size:16px;color:#111;letter-spacing:0.197px;">Dienstleistungsentstehungsprozess</div>
<div class="a t" style="left:479.50px;top:595px;font-size:16px;color:#111;">/ Erbringung der Dienstleistung</div>
</div></div>
<div class="a t" style="left:738.00px;top:574px;font-size:16px;color:#111;">2016</div>
<div class="a t" style="left:828.00px;top:574px;font-size:16px;color:#111;">P-6.3-1601-C-11413-1</div>
<div class="a t" style="left:1022.00px;top:574px;font-size:16px;color:#111;">07.01.2025</div>
<svg class="a" style="left:1136px;top:568.5px" width="24" height="24" viewBox="0 0 24 24"><circle cx="9.5" cy="9.5" r="7" fill="none" stroke="#465050" stroke-width="3.2"/><path d="M14.5 14.5L22 22" stroke="#465050" stroke-width="4.5" stroke-linecap="butt"/></svg>
<div class="a t" style="left:1172.50px;top:564px;font-size:16px;color:#111;">Zertifikat VDA 6.3</div>
<div class="a t" style="left:1172.50px;top:584px;font-size:16px;color:#111;">2016 20250107.pdf</div>
<div class="a t" style="left:1328.00px;top:574px;font-size:16px;color:#111;">3</div>
<svg class="a" style="left:443px;top:635.5px" width="24" height="24" viewBox="0 0 24 24"><path d="M5 16L16 5Q18.2 2.8 20.4 5L20.9 5.5Q23.1 7.7 20.9 9.9L9.9 20.9Z" fill="none" stroke="#465050" stroke-width="2.6" stroke-linejoin="round"/><path d="M0.8 24L3.6 15L10.2 21.4Z" fill="#465050"/></svg>
<div class="a" style="left:474px;top:614.5px;width:258px;height:66px;overflow:hidden"><div class="a" style="left:-474px;top:-614.5px;width:1918px;height:996px">
<div class="a t" style="left:479.50px;top:620px;font-size:16px;color:#111;">VDA 6.3</div>
<div class="a t" style="left:479.50px;top:641px;font-size:16px;color:#111;">Produktentstehungsprozess /</div>
<div class="a t" style="left:479.50px;top:662px;font-size:16px;color:#111;">Serienproduktion</div>
</div></div>
<div class="a t" style="left:738.00px;top:641px;font-size:16px;color:#111;">2016</div>
<div class="a t" style="left:828.00px;top:641px;font-size:16px;color:#111;">P-6.3-1601-C-11413-1</div>
<div class="a t" style="left:1022.00px;top:641px;font-size:16px;color:#111;">07.01.2025</div>
<svg class="a" style="left:1136px;top:635.5px" width="24" height="24" viewBox="0 0 24 24"><circle cx="9.5" cy="9.5" r="7" fill="none" stroke="#465050" stroke-width="3.2"/><path d="M14.5 14.5L22 22" stroke="#465050" stroke-width="4.5" stroke-linecap="butt"/></svg>
<div class="a t" style="left:1172.50px;top:631px;font-size:16px;color:#111;">Zertifikat VDA 6.3</div>
<div class="a t" style="left:1172.50px;top:651px;font-size:16px;color:#111;">2016 20250107.pdf</div>
<div class="a t" style="left:1328.00px;top:641px;font-size:16px;color:#111;">3</div>
<div class="a" style="left:437px;top:893px;width:939px;height:22px;background:#f0f0f0;"></div>
<div class="a" style="left:462px;top:893px;width:773px;height:22px;background:#cdcdcd;"></div>
<svg class="a" style="left:444px;top:898px" width="10" height="12" viewBox="0 0 10 12"><path d="M8 0L10 2L5 6L10 10L8 12L1 6Z" fill="#555"/></svg>
<svg class="a" style="left:1359px;top:898px" width="10" height="12" viewBox="0 0 10 12"><path d="M2 0L0 2L5 6L0 10L2 12L9 6Z" fill="#555"/></svg>
</body></html>
